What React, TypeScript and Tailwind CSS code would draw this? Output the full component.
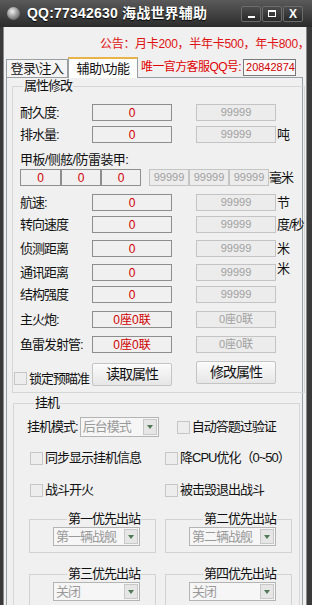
import React from 'react';

const FONT = { fontFamily: '"Liberation Sans", "Noto Sans CJK SC", sans-serif' };

function Field({ value, dim, w = 'w-[80px]' }: { value: string; dim?: boolean; w?: string }) {
  return (
    <div
      className={`${w} h-[17px] shrink-0 flex items-center justify-center leading-none ${
        dim
          ? 'border border-[#c4c4c4] bg-[#ececec] text-[#a0a0a0] text-[11px]'
          : 'border border-[#8e8e8e] bg-[#f0f0f0] text-[#d00000] text-[12px]'
      }`}
    >
      {value}
    </div>
  );
}

function Row({ label, left, right, unit, mt, unitUp }: { label: string; left: string; right: string; unit?: string; mt: string; unitUp?: boolean }) {
  return (
    <div className={`flex items-center h-[17px] ${mt}`}>
      <div className="w-[72px] shrink-0 text-[13px] tracking-[-1px] text-[#111] whitespace-nowrap">{label}</div>
      <Field value={left} />
      <div className="w-[24px] shrink-0" />
      <Field value={right} dim />
      {unit && (
        <div className={`pl-[1px] text-[13px] tracking-[-1px] text-[#111] whitespace-nowrap ${unitUp ? '-mt-[8px]' : ''}`}>{unit}</div>
      )}
    </div>
  );
}

function Check({ label }: { label: string }) {
  return (
    <div className="flex items-center gap-[2px] whitespace-nowrap">
      <div className="w-[13px] h-[13px] shrink-0 border border-[#c6c6c6] bg-[#ededed]" />
      <span className="text-[13px] tracking-[-1px] text-[#111]">{label}</span>
    </div>
  );
}

function Combo({ text, w }: { text: string; w: string }) {
  return (
    <div className={`${w} flex border border-[#b4b4b4] bg-[#f6f6f6]`}>
      <div className="flex-1 flex items-center pl-[2px] text-[13px] tracking-[-1px] text-[#9a9a9a] whitespace-nowrap overflow-hidden">{text}</div>
      <div className="w-[14px] my-[1px] mr-[1px] flex items-center justify-center border border-[#c8c8c8] bg-[#e6e6e6]">
        <div className="w-0 h-0 border-l-[3px] border-r-[3px] border-t-[4px] border-l-transparent border-r-transparent border-t-[#4f7a55]" />
      </div>
    </div>
  );
}

function Priority({ title, value }: { title: string; value: string }) {
  return (
    <fieldset className="w-[127px] border border-[#d2d2d2] pb-[6px] pl-[23px]">
      <legend className="mx-auto px-[1px] text-[13px] tracking-[-1px] leading-[16px] text-[#111]">{title}</legend>
      <Combo text={value} w="w-[87px] h-[19px]" />
    </fieldset>
  );
}

export default function App() {
  return (
    <div className="w-[312px] h-[605px] overflow-hidden flex flex-col bg-[#3a3a3a]" style={FONT}>
      {/* title bar */}
      <div className="h-[27px] shrink-0 flex items-center bg-gradient-to-b from-[#5a5a5a] to-[#2c2c2c] pl-[7px] pr-[9px]">
        <div className="w-[13px] h-[13px] rounded-full bg-[radial-gradient(circle_at_40%_35%,#f0f0f0,#8a8a8a_55%,#3a3a3a)]" />
        <div className="ml-[7px] text-white font-bold text-[14px] tracking-[0.2px] whitespace-nowrap [text-shadow:0_1px_1px_#000]">
          QQ:77342630 海战世界辅助
        </div>
        <div className="ml-auto flex gap-[1px]">
          {['min', 'max', 'close'].map(k => (
            <div key={k} className="w-[20px] h-[16px] rounded-[2px] border border-[#6c6c6c] bg-gradient-to-b from-[#4c4c4c] to-[#2a2a2a] flex items-center justify-center">
              {k === 'min' && <div className="w-[7px] h-[2px] bg-white mt-[6px]" />}
              {k === 'max' && <div className="w-[8px] h-[7px] border border-white border-t-2" />}
              {k === 'close' && <span className="text-white text-[12px] font-bold leading-none">X</span>}
            </div>
          ))}
        </div>
      </div>

      <div className="flex-1 flex min-h-0">
        <div className="w-[4px] shrink-0 bg-[#3a3a3a] border-r border-[#8a8a8a]" />
        <div className="flex-1 min-w-0 bg-[#f0f0f0] flex flex-col overflow-hidden">
          {/* notice */}
          <div className="h-[30px] shrink-0 flex items-end pl-[96px] pb-[4px] text-[12px] tracking-[-0.3px] text-[#e01010] whitespace-nowrap">
            公告：月卡200，半年卡500，年卡800，
          </div>

          {/* tabs */}
          <div className="h-[20px] shrink-0 flex items-end pl-[2px]">
            <div className="w-[62px] shrink-0 h-[18px] border border-b-0 border-[#9aa0a2] bg-[#f4f4f4] flex items-center justify-center text-[13px] tracking-[-0.5px] text-[#111]">
              登录\注入
            </div>
            <div className="w-[70px] shrink-0 h-[21px] -mb-[1px] border-x border-[#9aa0a2] border-t-2 border-t-[#e7b34a] bg-white flex items-center justify-center text-[13px] tracking-[-0.5px] text-[#111] relative z-10">
              辅助\功能
            </div>
            <div className="ml-[3px] shrink-0 self-center text-[12px] tracking-[-0.6px] text-[#e00000] whitespace-nowrap">唯一官方客服QQ号:</div>
            <div className="ml-[2px] shrink-0 self-center w-[53px] h-[17px] border border-[#7a7a7a] bg-[#f8f8f8] text-[11px] text-[#d00000] flex items-center pl-[2px] overflow-hidden whitespace-nowrap">
              20842874
            </div>
          </div>

          {/* tab panel */}
          <div className="flex-1 ml-[2px] mr-[3px] border border-[#9aa0a2] bg-[#f0f0f0] pl-[5px] pr-[2px]">
            <fieldset className="border border-[#d6d6d6] pl-[7px] pb-[6px]">
              <legend className="ml-[3px] px-[1px] text-[13px] tracking-[-1px] leading-[16px] text-[#111]">属性修改</legend>
              <Row label="耐久度:" left="0" right="99999" mt="mt-[10px]" />
              <Row label="排水量:" left="0" right="99999" unit="吨" mt="mt-[5px]" />
              <div className="mt-[8px] h-[18px] text-[13px] tracking-[-0.6px] text-[#111] leading-[18px]">甲板/侧舷/防雷装甲:</div>
              <div className="flex items-center h-[17px]">
                <Field value="0" w="w-[41px]" />
                <Field value="0" w="w-[40px]" />
                <Field value="0" w="w-[40px]" />
                <div className="w-[8px] shrink-0" />
                <Field value="99999" dim w="w-[40px]" />
                <Field value="99999" dim w="w-[40px]" />
                <Field value="99999" dim w="w-[40px]" />
                <div className="text-[13px] tracking-[-1px] text-[#111] whitespace-nowrap">毫米</div>
              </div>
              <Row label="航速:" left="0" right="99999" unit="节" mt="mt-[8px]" />
              <Row label="转向速度" left="0" right="99999" unit="度/秒" mt="mt-[5px]" />
              <Row label="侦测距离" left="0" right="99999" unit="米" mt="mt-[7px]" />
              <Row label="通讯距离" left="0" right="99999" unit="米" unitUp mt="mt-[7px]" />
              <Row label="结构强度" left="0" right="99999" mt="mt-[5px]" />
              <Row label="主火炮:" left="0座0联" right="0座0联" mt="mt-[8px]" />
              <Row label="鱼雷发射管:" left="0座0联" right="0座0联" mt="mt-[8px]" />
              <div className="mt-[8px] flex items-start h-[25px] -ml-[6px]">
                <div className="w-[78px] shrink-0 mt-[8px]">
                  <Check label="锁定预瞄准" />
                </div>
                <button className="mt-[2px] w-[80px] h-[23px] border border-[#c4c4c4] rounded-[2px] bg-gradient-to-b from-[#fbfbfb] to-[#e6e6e6] text-[14px] tracking-[-1px] text-[#111]">
                  读取属性
                </button>
                <div className="w-[24px] shrink-0" />
                <button className="w-[80px] h-[23px] border border-[#c4c4c4] rounded-[2px] bg-gradient-to-b from-[#fbfbfb] to-[#e6e6e6] text-[14px] tracking-[-1px] text-[#111]">
                  修改属性
                </button>
              </div>
            </fieldset>

            <fieldset className="mt-[2px] ml-[1px] border border-[#d6d6d6] pl-[13px] pb-[20px]">
              <legend className="ml-[7px] px-[1px] text-[13px] tracking-[-1px] leading-[16px] text-[#111]">挂机</legend>
              <div className="mt-[6px] flex items-center h-[20px]">
                <span className="text-[13px] tracking-[-1px] text-[#111] whitespace-nowrap">挂机模式:</span>
                <div className="ml-[2px]">
                  <Combo text="后台模式" w="w-[79px] h-[20px]" />
                </div>
                <div className="ml-[18px]">
                  <Check label="自动答题过验证" />
                </div>
              </div>
              <div className="mt-[11px] flex items-center h-[20px] pl-[3px]">
                <div className="w-[135px] shrink-0"><Check label="同步显示挂机信息" /></div>
                <Check label="降CPU优化（0~50）" />
              </div>
              <div className="mt-[12px] flex items-center h-[20px] pl-[3px]">
                <div className="w-[135px] shrink-0"><Check label="战斗开火" /></div>
                <Check label="被击毁退出战斗" />
              </div>
              <div className="mt-[11px] grid grid-cols-[127px_127px] gap-x-[9px] gap-y-[13px] pl-[2px]">
                <Priority title="第一优先出站" value="第一辆战舰" />
                <Priority title="第二优先出站" value="第二辆战舰" />
                <Priority title="第三优先出站" value="关闭" />
                <Priority title="第四优先出站" value="关闭" />
              </div>
            </fieldset>
          </div>
        </div>
        <div className="w-[6px] shrink-0 bg-[#3a3a3a] border-l border-[#8a8a8a]" />
      </div>
    </div>
  );
}
